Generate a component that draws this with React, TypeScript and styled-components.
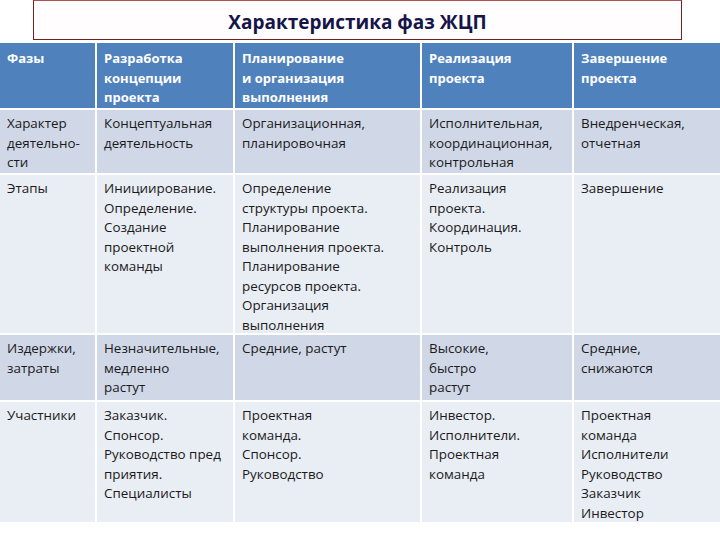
import React from 'react';
import styled, { createGlobalStyle } from 'styled-components';

const GlobalStyle = createGlobalStyle`
  html, body {
    margin: 0;
    padding: 0;
    background: #ffffff;
  }
  body {
    font-family: 'Open Sans', 'Liberation Sans', sans-serif;
  }
`;

const Page = styled.div`
  width: 720px;
  height: 540px;
  overflow: hidden;
  display: flex;
  flex-direction: column;
  background: #ffffff;
`;

const TitleBox = styled.div`
  margin: 0 38px 3px 33px;
  height: 40px;
  box-sizing: border-box;
  border: 1px solid #7a1f1f;
  border-top-color: #b05050;
  display: flex;
  align-items: center;
  justify-content: center;
  background: #fffdfd;
`;

const Title = styled.h1`
  margin: 0;
  padding-top: 4px;
  font-family: 'Open Sans', 'Liberation Sans', sans-serif;
  font-weight: 700;
  font-size: 19px;
  color: #15154a;
`;

const Table = styled.div`
  display: grid;
  grid-template-columns: 95px 136px 185px 150px 1fr;
  grid-template-rows: 65px 63px 158px 65px 120px;
  gap: 2px;
`;

const Cell = styled.div<{ $kind: 'head' | 'odd' | 'even' }>`
  box-sizing: border-box;
  padding: ${(p) => (p.$kind === 'head' ? '6px 2px 0 7px' : '4px 2px 0 7px')};
  font-family: 'Open Sans', 'Liberation Sans', sans-serif;
  font-size: ${(p) => (p.$kind === 'head' ? '13px' : '13.4px')};
  line-height: 19.5px;
  font-weight: ${(p) => (p.$kind === 'head' ? 700 : 400)};
  color: ${(p) => (p.$kind === 'head' ? '#ffffff' : '#1a1a1a')};
  background: ${(p) =>
    p.$kind === 'head' ? '#4f81bd' : p.$kind === 'odd' ? '#d0d8e8' : '#e9edf4'};
  white-space: pre-line;
`;

const rows: string[][] = [
  [
    'Фазы',
    'Разработка\nконцепции\nпроекта',
    'Планирование\nи организация\nвыполнения',
    'Реализация\nпроекта',
    'Завершение\nпроекта',
  ],
  [
    'Характер\nдеятельно-\nсти',
    'Концептуальная\nдеятельность',
    'Организационная,\nпланировочная',
    'Исполнительная,\nкоординационная,\nконтрольная',
    'Внедренческая,\nотчетная',
  ],
  [
    'Этапы',
    'Инициирование.\nОпределение.\nСоздание\nпроектной\nкоманды',
    'Определение\nструктуры проекта.\nПланирование\nвыполнения проекта.\nПланирование\nресурсов проекта.\nОрганизация\nвыполнения',
    'Реализация\nпроекта.\nКоординация.\nКонтроль',
    'Завершение',
  ],
  [
    'Издержки,\nзатраты',
    'Незначительные,\nмедленно\nрастут',
    'Средние, растут',
    'Высокие,\nбыстро\nрастут',
    'Средние,\nснижаются',
  ],
  [
    'Участники',
    'Заказчик.\nСпонсор.\nРуководство пред\nприятия.\nСпециалисты',
    'Проектная\nкоманда.\nСпонсор.\nРуководство',
    'Инвестор.\nИсполнители.\nПроектная\nкоманда',
    'Проектная\nкоманда\nИсполнители\nРуководство\nЗаказчик\nИнвестор',
  ],
];

export default function App() {
  return (
    <Page>
      <GlobalStyle />
      <TitleBox>
        <Title>Характеристика фаз ЖЦП</Title>
      </TitleBox>
      <Table>
        {rows.map((row, r) =>
          row.map((text, c) => (
            <Cell
              key={`${r}-${c}`}
              $kind={r === 0 ? 'head' : r % 2 === 1 ? 'odd' : 'even'}
            >
              {text}
            </Cell>
          ))
        )}
      </Table>
    </Page>
  );
}
